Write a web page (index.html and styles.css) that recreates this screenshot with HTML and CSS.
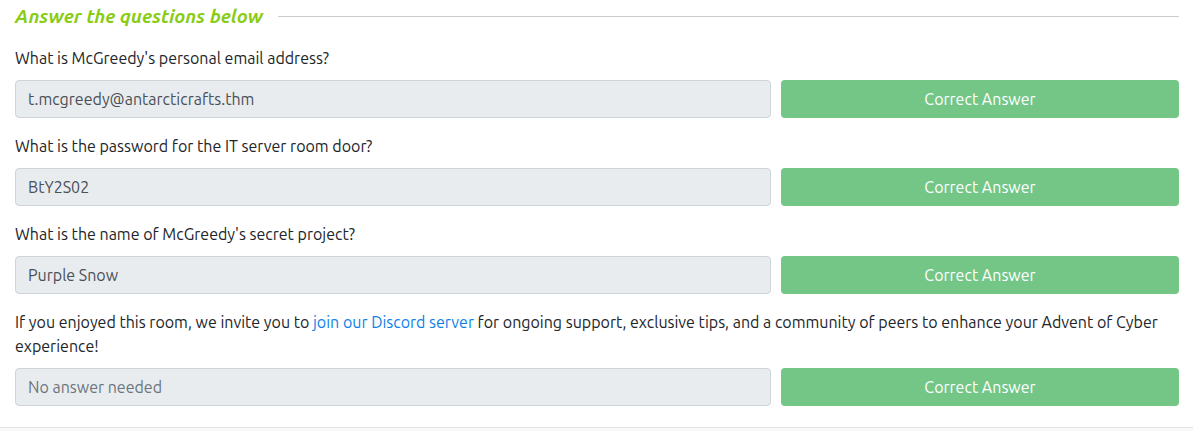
FILE: index.html
```html
<!DOCTYPE html>
<html lang="en">
<head>
<meta charset="utf-8">
<link rel="stylesheet" href="styles.css">
</head>
<body>
<div class="panel">
  <div class="heading">
    <h4 class="heading-title">Answer the questions below</h4>
    <span class="heading-rule"></span>
  </div>

  <div class="question">
    <p class="q-text">What is McGreedy's personal email address?</p>
    <div class="answer-row">
      <div class="answer-field">t.mcgreedy@antarcticrafts.thm</div>
      <button class="answer-btn">Correct Answer</button>
    </div>
  </div>

  <div class="question">
    <p class="q-text">What is the password for the IT server room door?</p>
    <div class="answer-row">
      <div class="answer-field">BtY2S02</div>
      <button class="answer-btn">Correct Answer</button>
    </div>
  </div>

  <div class="question">
    <p class="q-text">What is the name of McGreedy's secret project?</p>
    <div class="answer-row">
      <div class="answer-field">Purple Snow</div>
      <button class="answer-btn">Correct Answer</button>
    </div>
  </div>

  <div class="question">
    <p class="q-text">If you enjoyed this room, we invite you to <a class="link" href="#">join our Discord server</a> for ongoing support, exclusive tips, and a community of peers to enhance your Advent of Cyber experience!</p>
    <div class="answer-row">
      <div class="answer-field placeholder">No answer needed</div>
      <button class="answer-btn">Correct Answer</button>
    </div>
  </div>
</div>
<div class="footer-strip"></div>
</body>
</html>
```

FILE: styles.css
```css
* { box-sizing: border-box; }

html, body {
  margin: 0;
  padding: 0;
  background: #ffffff;
}

body {
  font-family: "Ubuntu", "Open Sans", "Noto Sans", sans-serif;
  font-size: 16px;
  color: #212529;
}

.panel {
  padding: 0 14px 21px 15px;
  border-bottom: 1px solid #e3e3e3;
}

.heading {
  display: flex;
  align-items: center;
  gap: 15px;
  height: 33px;
}

.heading-title {
  margin: 0;
  font-size: 19px;
  font-weight: 700;
  font-style: italic;
  color: #88cc14;
  white-space: nowrap;
  line-height: 1;
}

.heading-rule {
  flex: 1;
  height: 1px;
  background: #cccccc;
}

.question {
  margin-top: 13px;
}

.question + .question {
  margin-top: 16px;
}

.q-text {
  margin: 0 0 10px;
  line-height: 24px;
}

.link {
  color: #0d7fe8;
  text-decoration: none;
}

.answer-row {
  display: grid;
  grid-template-columns: 756px 1fr;
  gap: 10px;
}

.answer-field {
  height: 38px;
  padding: 0 12px;
  display: flex;
  align-items: center;
  background: #e9ecef;
  border: 1px solid #ced4da;
  border-radius: 4px;
  color: #495057;
  font-size: 16px;
}

.answer-field.placeholder {
  color: #6c757d;
}

.answer-btn {
  height: 38px;
  border: 0;
  border-radius: 4px;
  background: #73c686;
  color: #ffffff;
  font-family: inherit;
  font-size: 16px;
  padding: 0;
}

.footer-strip {
  height: 8px;
  background: #f8f9fa;
}
```
